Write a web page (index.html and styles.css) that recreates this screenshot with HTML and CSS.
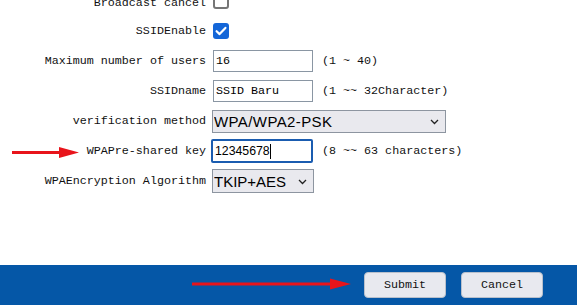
FILE: index.html
```html
<!DOCTYPE html>
<html lang="en">
<head>
  <meta charset="UTF-8" />
  <meta name="viewport" content="width=device-width, initial-scale=1" />
  <title>Wireless Settings</title>
  <link rel="stylesheet" href="styles.css">
</head>
<body>
  <div class="form">
    <div class="row first">
      <label class="label">Broadcast cancel</label>
      <div class="field"><span class="check"></span></div>
    </div>
    <div class="row">
      <label class="label">SSIDEnable</label>
      <div class="field">
        <span class="check checked">
          <svg width="16" height="16" viewBox="0 0 16 16"><path d="M3.6 8.2 L6.6 11.1 L12.4 4.9" fill="none" stroke="#fff" stroke-width="2.2" stroke-linecap="round" stroke-linejoin="round"/></svg>
        </span>
      </div>
    </div>
    <div class="row">
      <label class="label">Maximum number of users</label>
      <div class="field">
        <input class="text" type="text" value="16">
        <span class="hint">(1 ~ 40)</span>
      </div>
    </div>
    <div class="row">
      <label class="label">SSIDname</label>
      <div class="field">
        <input class="text" type="text" value="SSID Baru">
        <span class="hint">(1 ~~ 32Character)</span>
      </div>
    </div>
    <div class="row">
      <label class="label">verification method</label>
      <div class="field">
        <span class="select-wrap wide">
          <select class="select"><option>WPA/WPA2-PSK</option></select>
          <svg class="chevron" width="9" height="6" viewBox="0 0 9 6"><path d="M1 1 L4.5 4.5 L8 1" fill="none" stroke="#222" stroke-width="1.3"/></svg>
        </span>
      </div>
    </div>
    <div class="row">
      <label class="label">WPAPre-shared key</label>
      <div class="field">
        <span class="text focused">12345678<span class="caret"></span></span>
        <span class="hint">(8 ~~ 63 characters)</span>
      </div>
    </div>
    <div class="row">
      <label class="label">WPAEncryption Algorithm</label>
      <div class="field">
        <span class="select-wrap narrow">
          <select class="select"><option>TKIP+AES</option></select>
          <svg class="chevron" width="9" height="6" viewBox="0 0 9 6"><path d="M1 1 L4.5 4.5 L8 1" fill="none" stroke="#222" stroke-width="1.3"/></svg>
        </span>
      </div>
    </div>
  </div>

  <div class="footer">
    <button class="btn">Submit</button>
    <button class="btn">Cancel</button>
  </div>

  <!-- red annotation arrows -->
  <svg class="arrow arrow-key" width="67" height="13" viewBox="0 0 67 13">
    <line x1="0" y1="6.5" x2="50" y2="6.5" stroke="#e8141b" stroke-width="3"/>
    <polygon points="47,1 67,6.5 47,12" fill="#e8141b"/>
  </svg>
  <svg class="arrow arrow-submit" width="159" height="12" viewBox="0 0 159 12">
    <line x1="0" y1="6" x2="142" y2="6" stroke="#e8141b" stroke-width="3"/>
    <polygon points="138,0.5 159,6 138,11.5" fill="#e8141b"/>
  </svg>
</body>
</html>
```

FILE: styles.css
```css
body {
  margin: 0;
  font-family: "Liberation Mono", monospace;
  font-size: 11.7px;
  color: #111;
  background-color: #fff;
  position: relative;
  overflow: hidden;
}
.form {
  margin-top: -14px;
}
.row {
  display: flex;
  align-items: center;
  height: 30px;
}
.row.first .label {
  padding-top: 4px;
}
.label {
  width: 206px;
  text-align: right;
  white-space: nowrap;
}
.field {
  display: flex;
  align-items: center;
  gap: 9px;
  padding-left: 7px;
}
.check {
  box-sizing: border-box;
  width: 16px;
  height: 16px;
  border: 2px solid #767676;
  border-radius: 3px;
  background-color: #fff;
}
.check.checked {
  border: none;
  background-color: #1466d8;
}
.check svg {
  display: block;
}
.text {
  box-sizing: border-box;
  width: 100px;
  height: 22px;
  margin: 0;
  padding: 0 2px;
  border: 1px solid #8a96a3;
  border-radius: 0;
  font-family: "Liberation Mono", monospace;
  font-size: 11.7px;
  color: #000;
  background-color: #fff;
  outline: none;
}
.text.focused {
  display: flex;
  align-items: center;
  width: 102px;
  height: 24px;
  margin-left: -2px;
  padding-left: 2px;
  border: 2px solid #1a5cb0;
  border-radius: 2px;
  font-family: "Liberation Sans", Arial, sans-serif;
  font-size: 12.3px;
}
.caret {
  width: 1px;
  height: 15px;
  background-color: #000;
}
.select-wrap {
  position: relative;
  display: block;
  margin-left: -1px;
}
.select {
  box-sizing: border-box;
  display: block;
  width: 100%;
  margin: 0;
  padding: 0 1px;
  border: 1px solid #8d95a0;
  border-radius: 0;
  appearance: none;
  background-color: #e9e9ee;
  font-family: "Liberation Sans", Arial, sans-serif;
  font-size: 15px;
  color: #000;
}
.select-wrap.wide {
  width: 234px;
}
.select-wrap.wide .select {
  height: 23px;
  letter-spacing: 0.4px;
}
.select-wrap.narrow {
  width: 102px;
}
.select-wrap.narrow .select {
  height: 24px;
}
.chevron {
  position: absolute;
  right: 7px;
  top: 50%;
  margin-top: -2px;
}
.footer {
  display: flex;
  justify-content: flex-end;
  align-items: center;
  gap: 15px;
  height: 40px;
  margin-top: 69px;
  padding-right: 34px;
  background-color: #0557a7;
}
.btn {
  box-sizing: border-box;
  width: 82px;
  height: 26px;
  padding: 0;
  border: 1px solid #b9c0cc;
  border-radius: 4px;
  background-color: #e8e9ef;
  font-family: "Liberation Mono", monospace;
  font-size: 11.7px;
  color: #111;
  cursor: pointer;
}
.arrow {
  position: absolute;
  display: block;
}
.arrow-key {
  left: 12px;
  top: 146px;
}
.arrow-submit {
  left: 192px;
  top: 278px;
}
```
